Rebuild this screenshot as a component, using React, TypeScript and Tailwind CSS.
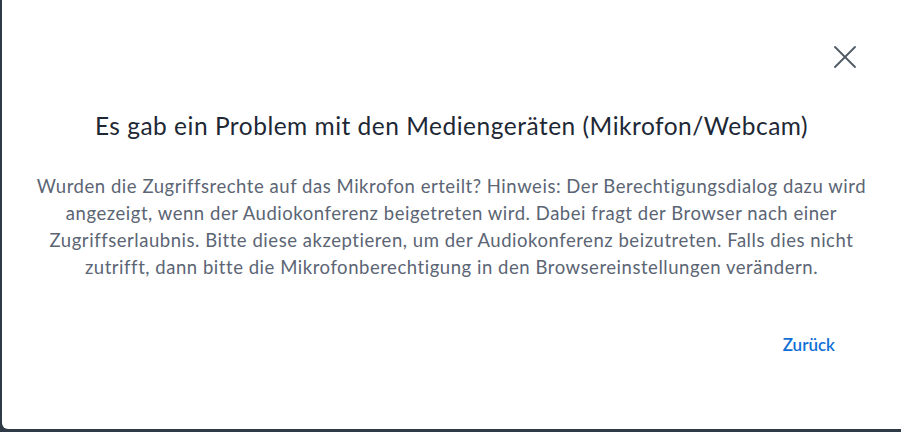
import { X } from 'lucide-react';

const FONT = "font-['Lato','Liberation_Sans',sans-serif]";

function MediaErrorModal() {
  return (
    <div className={`flex h-full flex-col rounded-bl-[6px] bg-white ${FONT}`}>
      <div className="flex justify-end pr-[36px] pt-[37px]">
        <button type="button" aria-label="Schließen" className="text-[#4e5966]">
          <X size={40} strokeWidth={1.1} />
        </button>
      </div>
      <h2 className="mt-[34px] text-center text-[24.5px] leading-[30px] tracking-[0.5px] text-[#1e2835]">
        Es gab ein Problem mit den Mediengeräten (Mikrofon/Webcam)
      </h2>
      <p className="mt-[32px] text-center text-[18.5px] leading-[27px] tracking-[0.54px] text-[#5b6574]">
        Wurden die Zugriffsrechte auf das Mikrofon erteilt? Hinweis: Der Berechtigungsdialog dazu wird
        <br />
        angezeigt, wenn der Audiokonferenz beigetreten wird. Dabei fragt der Browser nach einer
        <br />
        Zugriffserlaubnis. Bitte diese akzeptieren, um der Audiokonferenz beizutreten. Falls dies nicht
        <br />
        zutrifft, dann bitte die Mikrofonberechtigung in den Browsereinstellungen verändern.
      </p>
      <div className="mt-[51px] flex justify-end pr-[66px]">
        <button type="button" className="text-[17px] font-semibold text-[#0f6fd6]">
          Zurück
        </button>
      </div>
    </div>
  );
}

export default function App() {
  return (
    <div className="h-[432px] w-[901px] bg-[#2e3a46] pb-[3px] pl-[2px]">
      <MediaErrorModal />
    </div>
  );
}
